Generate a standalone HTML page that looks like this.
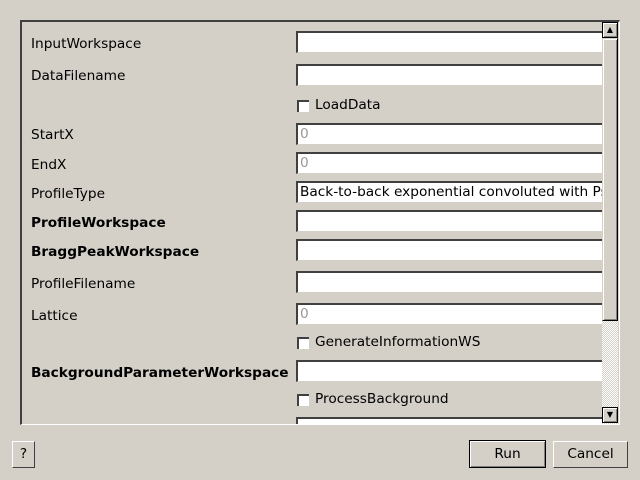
<!DOCTYPE html><html><head><style>
body{margin:0;width:640px;height:480px;background:#d4d0c8;position:relative;overflow:hidden;font-family:"DejaVu Sans",sans-serif;font-size:13.7px;color:#000}
.a{position:absolute}
.frame{left:20px;top:20px;width:600px;height:405px;border-top:2px solid #404040;border-left:2px solid #404040;border-right:1px solid #fff;border-bottom:1px solid #fff;box-sizing:border-box;overflow:hidden}
.in{position:absolute;left:274px;width:320px;height:22px;background:#fff;border-top:2px solid #404040;border-left:2px solid #404040;border-bottom:1px solid #d4d0c8;box-sizing:border-box;color:#999;font-size:13.7px;line-height:18px;padding-left:2px;white-space:nowrap;overflow:hidden}
.lb{position:absolute;left:9px;line-height:16px}
.b{font-weight:bold}
.cb{position:absolute;left:275px;width:12px;height:12px;background:#fff;border-top:2px solid #404040;border-left:2px solid #404040;box-sizing:border-box}
.cl{position:absolute;left:293px;line-height:16px}
.btn{position:absolute;border:1px solid #000;box-shadow:inset 1px 1px #fff,inset -1px -1px #808080;box-sizing:border-box;text-align:center;background:#d4d0c8}
</style></head><body>
<div class="a frame">
<div class="lb" style="top:14px">InputWorkspace</div><div class="in" style="top:9px"></div>
<div class="lb" style="top:46px">DataFilename</div><div class="in" style="top:42px"></div>
<div class="cb" style="top:78px"></div><div class="cl" style="top:75px">LoadData</div>
<div class="lb" style="top:105px">StartX</div><div class="in" style="top:101px">0</div>
<div class="lb" style="top:135px">EndX</div><div class="in" style="top:130px">0</div>
<div class="lb" style="top:164px">ProfileType</div><div class="in" style="top:159px;color:#000">Back-to-back exponential convoluted with PseudoVoigt</div>
<div class="lb b" style="top:193px">ProfileWorkspace</div><div class="in" style="top:188px"></div>
<div class="lb b" style="top:222px">BraggPeakWorkspace</div><div class="in" style="top:217px"></div>
<div class="lb" style="top:254px">ProfileFilename</div><div class="in" style="top:249px"></div>
<div class="lb" style="top:286px">Lattice</div><div class="in" style="top:281px">0</div>
<div class="cb" style="top:315px"></div><div class="cl" style="top:312px">GenerateInformationWS</div>
<div class="lb b" style="top:343px">BackgroundParameterWorkspace</div><div class="in" style="top:338px"></div>
<div class="cb" style="top:372px"></div><div class="cl" style="top:369px">ProcessBackground</div>
<div class="in" style="top:395px"></div>
<div class="a" style="left:580px;top:0px;width:16px;height:402px;background:repeating-conic-gradient(#d4d0c8 0 25%,#fff 0 50%) 0 0/2px 2px"></div>
<div class="btn" style="left:580px;top:0px;width:16px;height:16px;font-size:8px;line-height:14px">▲</div>
<div class="btn" style="left:580px;top:16px;width:16px;height:283px;border-color:#d4d0c8 #000 #000 #d4d0c8"></div>
<div class="btn" style="left:580px;top:385px;width:16px;height:16px;font-size:8px;line-height:14px">▼</div>
</div>
<div class="btn" style="left:12px;top:441px;width:23px;height:27px;line-height:25px;border-color:#fff #404040 #404040 #fff;box-shadow:none">?</div>
<div class="btn" style="left:469px;top:440px;width:77px;height:28px;line-height:26px">Run</div>
<div class="btn" style="left:553px;top:441px;width:75px;height:27px;line-height:25px;border-color:#fff #404040 #404040 #fff;box-shadow:none">Cancel</div>
</body></html>
